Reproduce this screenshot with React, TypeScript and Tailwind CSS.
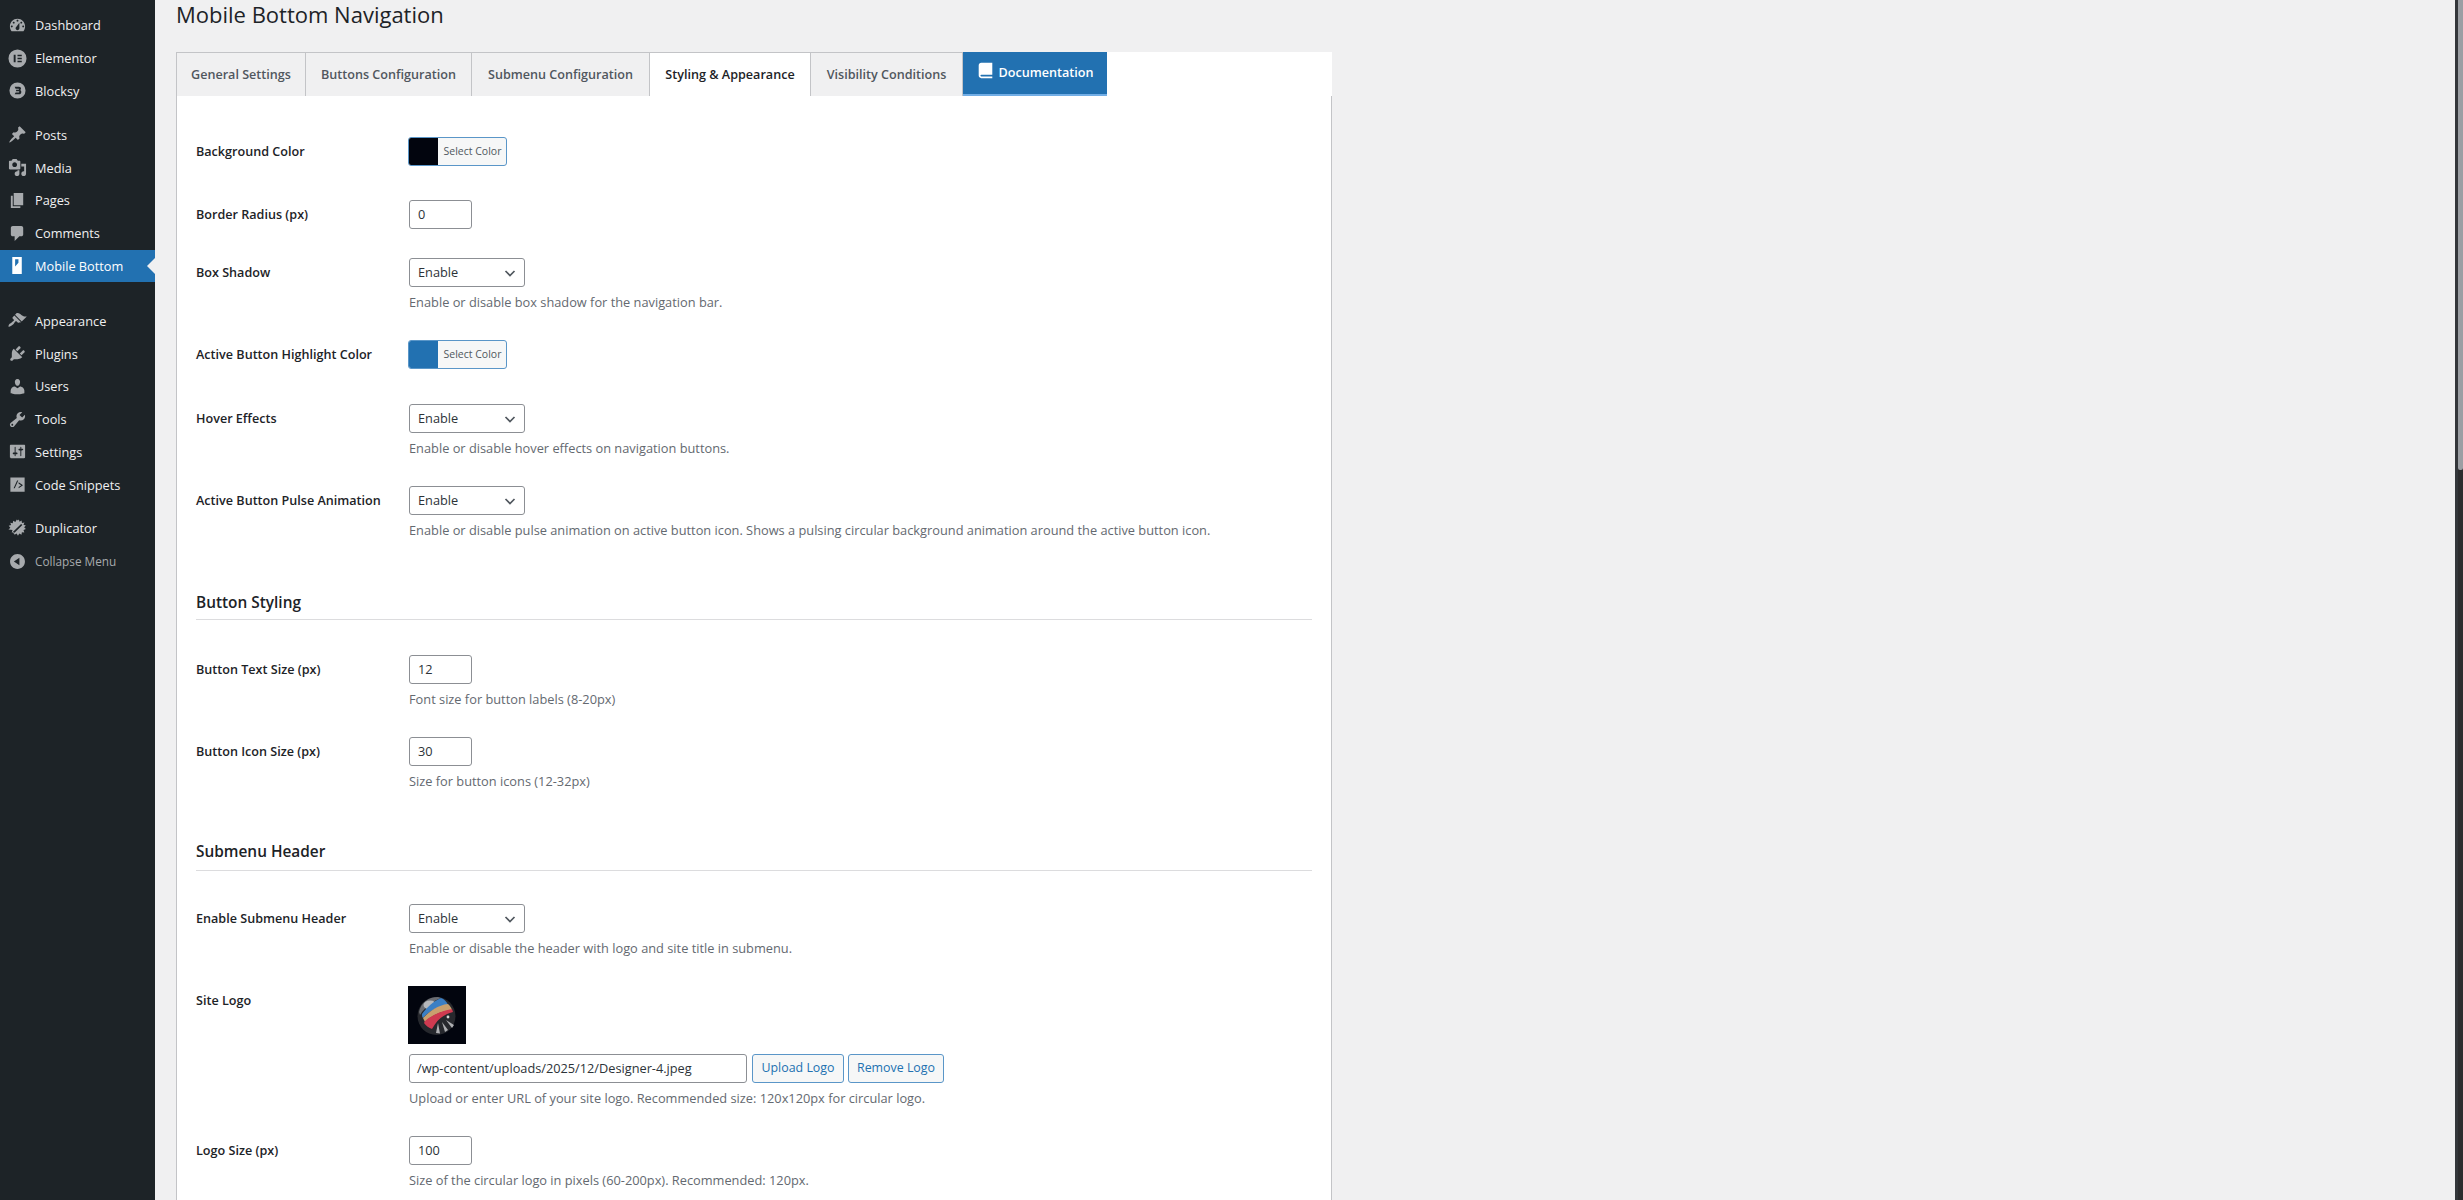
import type { ReactNode } from "react";

const font = "font-['Open_Sans','Noto_Sans',sans-serif]";

const Dash = ({ d, className = "" }: { d: string; className?: string }) => (
  <svg viewBox="0 0 20 20" className={`h-[19px] w-[19px] fill-current ${className}`}>
    <path fillRule="evenodd" d={d} />
  </svg>
);

const icons: Record<string, ReactNode> = {
  dashboard: <Dash d="M3.76 16h12.48c1.1-1.37 1.76-3.11 1.76-5 0-4.42-3.58-8-8-8s-8 3.58-8 8c0 1.89.66 3.63 1.76 5zM10 4c.55 0 1 .45 1 1s-.45 1-1 1-1-.45-1-1 .45-1 1-1zM6 6c.55 0 1 .45 1 1s-.45 1-1 1-1-.45-1-1 .45-1 1-1zm8 0c.55 0 1 .45 1 1s-.45 1-1 1-1-.45-1-1 .45-1 1-1zm-5.37 5.55L12 7v6c0 1.1-.9 2-2 2s-2-.9-2-2c0-.57.24-1.08.63-1.45zM4 10c.55 0 1 .45 1 1s-.45 1-1 1-1-.45-1-1 .45-1 1-1zm12 0c.55 0 1 .45 1 1s-.45 1-1 1-1-.45-1-1 .45-1 1-1z" />,
  elementor: <Dash d="M10 .5a9.5 9.5 0 1 0 0 19 9.5 9.5 0 0 0 0-19zM6 6h2v8H6V6zm4 0h4.5v1.7H10V6zm0 3.15h4.5v1.7H10v-1.7zm0 3.15h4.5V14H10v-1.7z" />,
  blocksy: <Dash d="M10 1.5a8.5 8.5 0 1 0 0 17 8.5 8.5 0 0 0 0-17zM7 6h4.5c1.4 0 2.2.8 2.2 1.9 0 .8-.4 1.4-1 1.7.8.3 1.3 1 1.3 1.9 0 1.3-.9 2.5-2.5 2.5H7l1-2h3.3c.4 0 .6-.3.6-.6s-.2-.6-.6-.6H8.5V9.2h2.6c.4 0 .6-.2.6-.5s-.2-.6-.6-.6H8L7 6z" />,
  posts: <Dash d="M10.44 3.02l1.82-1.82 6.36 6.35-1.83 1.82c-1.05-.68-2.48-.57-3.41.36l-.75.75c-.92.93-1.04 2.35-.35 3.41l-1.83 1.82-2.41-2.41-2.8 2.79c-.42.42-3.38 2.71-3.8 2.29s1.86-3.39 2.28-3.81l2.79-2.79L4.1 9.36l1.83-1.82c1.05.69 2.48.57 3.4-.36l.75-.75c.93-.92 1.05-2.35.36-3.41z" />,
  media: <Dash d="M13 11V4c0-.55-.45-1-1-1h-1.67L9 1H5L3.67 3H2c-.55 0-1 .45-1 1v7c0 .55.45 1 1 1h10c.55 0 1-.45 1-1zM7 4.5c1.38 0 2.5 1.12 2.5 2.5S8.38 9.5 7 9.5 4.5 8.38 4.5 7 5.62 4.5 7 4.5zM14 6h5v10.5c0 1.38-1.12 2.5-2.5 2.5S14 17.88 14 16.5s1.12-2.5 2.5-2.5c.17 0 .34.02.5.05V9h-3V6zm-4 8.05V13h2v3.5c0 1.38-1.12 2.5-2.5 2.5S7 17.88 7 16.5 8.12 14 9.5 14c.17 0 .34.02.5.05z" />,
  pages: <Dash d="M6 15V2h10v13H6zm-1 1h8v2H3V5h2v11z" />,
  comments: <Dash d="M5 2h9c1.1 0 2 .9 2 2v7c0 1.1-.9 2-2 2h-2l-5 5v-5H5c-1.1 0-2-.9-2-2V4c0-1.1.9-2 2-2z" />,
  mobile: <Dash d="M4.5 1h10v18h-10V1zm6.5 2.5H7.5v7.6L11 7.2V3.5z" />,
  appearance: <Dash d="M14.48 11.06L7.41 3.99l1.5-1.5c.5-.56 2.3-.47 3.51.32 1.21.8 1.43 1.28 2.91 2.1 1.18.64 2.45 1.26 4.45.85zm-.71.71L6.7 4.7 4.93 6.47c-.39.39-.39 1.02 0 1.41l1.06 1.06c.39.39.39 1.03 0 1.42-.6.6-1.43 1.11-2.21 1.69-.35.26-.7.53-1.01.84C1.43 13.23 0 15.9.61 16.5s3.27-.82 4.61-2.16c.31-.31.58-.66.84-1.01.58-.78 1.09-1.61 1.69-2.21.39-.39 1.02-.39 1.41 0l1.06 1.06c.39.39 1.02.39 1.41 0z" />,
  plugins: <Dash d="M13.11 4.36L9.87 7.6 8 5.73l3.24-3.24c.35-.34 1.05-.2 1.56.32.52.51.66 1.21.31 1.55zm-8 1.77l.91-1.12 9.01 9.01-1.19.84c-.71.71-2.63 1.16-3.82 1.16H6.14L4.9 17.26c-.59.59-1.54.59-2.12 0-.59-.58-.59-1.53 0-2.12l1.24-1.24v-3.88c0-1.13.4-3.19 1.09-3.89zm7.26 3.97l3.24-3.24c.34-.35 1.04-.21 1.55.31.52.51.66 1.21.31 1.55l-3.24 3.25z" />,
  users: <Dash d="M10 9.25c-2.27 0-2.73-3.44-2.73-3.44C7 4.02 7.82 2 9.97 2c2.16 0 2.98 2.02 2.71 3.81 0 0-.41 3.44-2.68 3.44zm0 2.57L12.72 10c2.39 0 4.52 2.33 4.52 4.53v2.49s-3.65 1.13-7.24 1.13c-3.65 0-7.24-1.13-7.24-1.13v-2.49c0-2.25 1.94-4.48 4.47-4.48z" />,
  tools: <Dash d="M16.68 9.77c-1.34 1.34-3.3 1.67-4.95.99l-5.41 6.52c-.99.99-2.59.99-3.58 0s-.99-2.59 0-3.57l6.52-5.42c-.68-1.65-.35-3.61.99-4.95 1.28-1.28 3.12-1.62 4.72-1.06l-2.89 2.89 2.82 2.82 2.86-2.87c.53 1.58.18 3.39-1.08 4.65zM3.81 16.21c.4.39 1.04.39 1.43 0 .4-.4.4-1.04 0-1.43-.39-.4-1.03-.4-1.43 0-.39.39-.39 1.03 0 1.43z" />,
  settings: <Dash d="M18 16V4c0-.55-.45-1-1-1H3c-.55 0-1 .45-1 1v12c0 .55.45 1 1 1h14c.55 0 1-.45 1-1zM8 11h1c.55 0 1 .45 1 1s-.45 1-1 1H8v1.5c0 .28-.22.5-.5.5s-.5-.22-.5-.5V13H6c-.55 0-1-.45-1-1s.45-1 1-1h1V5.5c0-.28.22-.5.5-.5s.5.22.5.5V11zm5-2h-1c-.55 0-1-.45-1-1s.45-1 1-1h1V5.5c0-.28.22-.5.5-.5s.5.22.5.5V7h1c.55 0 1 .45 1 1s-.45 1-1 1h-1v5.5c0 .28-.22.5-.5.5s-.5-.22-.5-.5V9z" />,
  snippets: <Dash d="M2.5 2.5h15v15h-15v-15zM9.6 5.8L5.9 14h1.2l3.7-8.2H9.6zm1.6 1.9v1.4l2.7 1.7-2.7 1.7V14l4.3-2.9v-.6l-4.3-2.8z" />,
  duplicator: <Dash d="M11.5 0.5l.6 2.4 2.2-1.3.4 2.6 2.6-.5-1 2.4 2.5.8-1.8 1.9 1.8 1.8-2.4 1-.1.1.9 2.4-2.6-.1-.4 2.6-2.3-1.3-1.4 2.2-1.4-2.2-2.3 1.2-.3-2.6-2.6.2.9-2.4L.5 11l2-1.8L.8 7.2l2.5-.8-.9-2.4 2.6.4.5-2.6 2.2 1.4L9.3.6l1.1.9 1.1-1zM13.8 5.2l-9 8.8 1.3 1.2 9-8.8-1.3-1.2z" />,
  collapse: <Dash d="M10 2.16c4.33 0 7.84 3.51 7.84 7.84s-3.51 7.84-7.84 7.84S2.16 14.33 2.16 10 5.71 2.16 10 2.16zm2 11.72V6.12L6.18 9.97z" />,
};

const menuGroups = [
  {
    gap: "",
    items: [
      ["Dashboard", "dashboard"],
      ["Elementor", "elementor"],
      ["Blocksy", "blocksy"],
    ],
  },
  {
    gap: "mt-[11px]",
    items: [
      ["Posts", "posts"],
      ["Media", "media"],
      ["Pages", "pages"],
      ["Comments", "comments"],
      ["Mobile Bottom", "mobile"],
    ],
  },
  {
    gap: "mt-[22px]",
    items: [
      ["Appearance", "appearance"],
      ["Plugins", "plugins"],
      ["Users", "users"],
      ["Tools", "tools"],
      ["Settings", "settings"],
      ["Code Snippets", "snippets"],
    ],
  },
  {
    gap: "mt-[11px]",
    items: [
      ["Duplicator", "duplicator"],
      ["Collapse Menu", "collapse"],
    ],
  },
];

const Sidebar = () => (
  <aside className="w-[155px] shrink-0 bg-[#1d2327] pt-[9px]">
    {menuGroups.map((group, i) => (
      <ul key={i} className={group.gap}>
        {group.items.map(([name, icon]) => {
          const active = name === "Mobile Bottom";
          const muted = name === "Collapse Menu";
          return (
            <li
              key={name}
              className={`relative flex h-[32.8px] items-center pl-[8px] ${
                active
                  ? "bg-[#2271b1] text-[12.75px] text-white"
                  : muted
                    ? "text-[11.8px] text-[#a7aaad]"
                    : "text-[12.75px] text-[#f0f0f1]"
              }`}
            >
              <span className={`mr-[8px] flex w-[19px] justify-center ${active ? "text-white" : "text-[#a7aaad]"}`}>
                {icons[icon]}
              </span>
              <span className="pt-px">{name}</span>
              {active && (
                <span className="absolute right-0 top-1/2 -translate-y-1/2 border-y-[8px] border-r-[8px] border-y-transparent border-r-[#f0f0f1]" />
              )}
            </li>
          );
        })}
      </ul>
    ))}
  </aside>
);

const tabs = [
  { name: "General Settings", w: "w-[130px]" },
  { name: "Buttons Configuration", w: "w-[166px]" },
  { name: "Submenu Configuration", w: "w-[178px]" },
  { name: "Styling & Appearance", w: "w-[161px]", active: true },
  { name: "Visibility Conditions", w: "w-[152px]" },
];

const Tabs = () => (
  <div className="flex h-[44px] bg-white">
    {tabs.map((t) => (
      <div
        key={t.name}
        className={`flex items-center justify-center border border-b-0 border-l-0 border-[#c3c4c7] pt-px text-[12.6px] font-semibold first:border-l ${t.w} ${
          t.active ? "bg-white text-[#1d2327]" : "bg-[#f0f0f1] text-[#50575e]"
        }`}
      >
        {t.name}
      </div>
    ))}
    <div className="flex w-[144px] items-center justify-center gap-[5px] border-b-2 border-b-[#72aee6] bg-[#2271b1] pt-px text-[12.6px] font-semibold text-white">
      <svg viewBox="0 0 20 20" className="mb-[6px] h-[17px] w-[17px] fill-current">
        <path d="M5 17h13v2H5c-1.66 0-3-1.34-3-3V4c0-1.66 1.34-3 3-3h13v14H5c-.55 0-1 .45-1 1s.45 1 1 1z" />
      </svg>
      Documentation
    </div>
  </div>
);

const Desc = ({ children }: { children: ReactNode }) => (
  <p className="mt-[6px] h-[18px] whitespace-nowrap text-[12.8px] leading-[18px] text-[#646970]">{children}</p>
);

const Row = ({ label, className = "", children }: { label: string; className?: string; children: ReactNode }) => (
  <div className={`flex ${className}`}>
    <div className="flex h-[29px] w-[213px] shrink-0 items-center pt-[2px] text-[12.6px] font-semibold text-[#1d2327]">{label}</div>
    <div className="min-w-0 flex-1">{children}</div>
  </div>
);

const NumberInput = ({ value }: { value: string }) => (
  <div className="flex h-[29px] w-[63px] items-center rounded-[3px] border border-[#8c8f94] bg-white px-[8px] pt-px text-[12.75px] text-[#2c3338]">
    {value}
  </div>
);

const Select = () => (
  <div className="flex h-[29px] w-[116px] items-center justify-between rounded-[3px] border border-[#8c8f94] bg-white pl-[8px] pr-[8px] text-[12.75px] text-[#2c3338]">
    <span className="pt-px">Enable</span>
    <svg viewBox="0 0 12 12" className="h-[12px] w-[12px] fill-none stroke-[#50575e] stroke-[1.7]">
      <path d="M1.5 4l4.5 4.5L10.5 4" />
    </svg>
  </div>
);

const ColorButton = ({ color }: { color: string }) => (
  <div className="-ml-px flex h-[29px] w-[99px] overflow-hidden rounded-[3px] border border-[#5a96c8] bg-[#f6f7f7]">
    <span className={`w-[29px] shrink-0 ${color}`} />
    <span className="flex flex-1 items-center justify-center pl-px text-[10.5px] text-[#50575e]">Select Color</span>
  </div>
);

const OutlineButton = ({ children, className = "" }: { children: ReactNode; className?: string }) => (
  <div
    className={`flex h-[29px] items-center justify-center rounded-[3px] border border-[#5a96c8] bg-[#f6f7f7] text-[12.4px] text-[#2271b1] ${className}`}
  >
    {children}
  </div>
);

const Heading = ({ children, className = "" }: { children: ReactNode; className?: string }) => (
  <h2 className={`border-b border-[#dcdcde] pt-px text-[15.4px] font-semibold leading-[20px] text-[#1d2327] ${className}`}>
    {children}
  </h2>
);

const SiteLogo = () => (
  <svg viewBox="0 0 58 58" className="-ml-px block h-[58px] w-[58px]">
    <rect width="58" height="58" fill="#02050e" />
    <circle cx="28.500" cy="30" r="19" fill="#26282d" />
    <path d="M11 26c2-9 9-15 19-15l3 1c-8 3-16 9-21 17z" fill="#6c6e73" />
    <ellipse cx="22" cy="19" rx="6.500" ry="4.500" fill="#b5b7bb" />
    <path d="M33 12c3 1 6 4 7 7-9 1-19 6-25 13-1-1-1-2-1-4 5-7 12-13 19-16z" fill="#3b7fc4" />
    <path d="M40 18c2 2 3 3 4 6-10 1-20 5-27 12l-2-4c7-7 15-13 25-14z" fill="#c9a06e" />
    <path d="M44 23l1 3c-8 2-15 6-21 17-3-1-6-3-8-6l1-2c7-6 16-10 27-12z" fill="#cf3a50" />
    <path d="M30 37l-2 10 4 .5zM34 36l3 10 3-2zM38 34l6 8 2-3z" fill="#aeafb2" />
    <circle cx="40" cy="31" r="1.400" fill="#d8d8d8" />
  </svg>
);

const App = () => (
  <div className={`flex h-[1200px] w-full overflow-hidden bg-[#f0f0f1] ${font}`}>
    <Sidebar />
    <main className="flex-1 overflow-hidden pl-[21px]">
      <h1 className="h-[52px] text-[22px] leading-[28px] text-[#1d2327]">Mobile Bottom Navigation</h1>
      <div className="w-[1156px]">
        <Tabs />
        <div className="h-[1110px] border-x border-[#c3c4c7] bg-white px-[19px] pt-[41px]">
          <Row label="Background Color">
            <ColorButton color="bg-[#02050e]" />
          </Row>
          <Row label="Border Radius (px)" className="mt-[34px]">
            <NumberInput value="0" />
          </Row>
          <Row label="Box Shadow" className="mt-[29px]">
            <Select />
            <Desc>Enable or disable box shadow for the navigation bar.</Desc>
          </Row>
          <Row label="Active Button Highlight Color" className="mt-[29px]">
            <ColorButton color="bg-[#2271b1]" />
          </Row>
          <Row label="Hover Effects" className="mt-[35px]">
            <Select />
            <Desc>Enable or disable hover effects on navigation buttons.</Desc>
          </Row>
          <Row label="Active Button Pulse Animation" className="mt-[29px]">
            <Select />
            <Desc>
              Enable or disable pulse animation on active button icon. Shows a pulsing circular background animation around the active button icon.
            </Desc>
          </Row>

          <Heading className="mt-[53px] pb-[6px]">Button Styling</Heading>
          <Row label="Button Text Size (px)" className="mt-[35px]">
            <NumberInput value="12" />
            <Desc>Font size for button labels (8-20px)</Desc>
          </Row>
          <Row label="Button Icon Size (px)" className="mt-[29px]">
            <NumberInput value="30" />
            <Desc>Size for button icons (12-32px)</Desc>
          </Row>

          <Heading className="mt-[51px] pb-[8px]">Submenu Header</Heading>
          <Row label="Enable Submenu Header" className="mt-[33px]">
            <Select />
            <Desc>Enable or disable the header with logo and site title in submenu.</Desc>
          </Row>
          <Row label="Site Logo" className="mt-[29px]">
            <SiteLogo />
            <div className="mt-[10px] flex gap-[4px]">
              <div className="mr-px flex h-[29px] w-[338px] items-center rounded-[3px] border border-[#8c8f94] bg-white px-[7px] pt-px text-[12.75px] text-[#2c3338]">
                /wp-content/uploads/2025/12/Designer-4.jpeg
              </div>
              <OutlineButton className="w-[92px]">Upload Logo</OutlineButton>
              <OutlineButton className="w-[96px]">Remove Logo</OutlineButton>
            </div>
            <Desc>Upload or enter URL of your site logo. Recommended size: 120x120px for circular logo.</Desc>
          </Row>
          <Row label="Logo Size (px)" className="mt-[29px]">
            <NumberInput value="100" />
            <Desc>Size of the circular logo in pixels (60-200px). Recommended: 120px.</Desc>
          </Row>
        </div>
      </div>
    </main>
    <div className="w-[8px] shrink-0 border-l-[3px] border-l-[#33363a] bg-[#2c2c2e]">
      <div className="h-[470px] rounded-b-[2px] bg-[#9b9ea3]" />
    </div>
  </div>
);

export default App;
